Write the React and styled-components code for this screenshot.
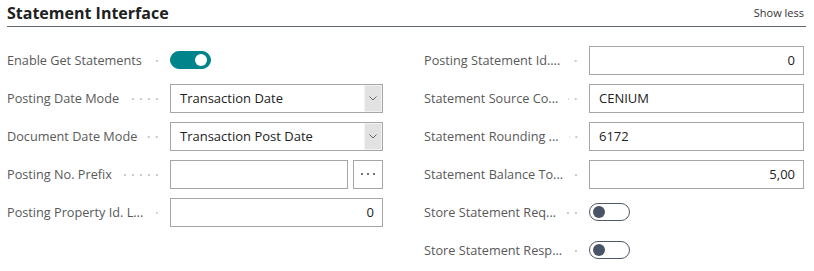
import React from "react";
import styled, { createGlobalStyle } from "styled-components";

const GlobalStyle = createGlobalStyle`
  body {
    margin: 0;
    background: #fff;
    font-family: "Open Sans", "Noto Sans", sans-serif;
  }
`;

const StyledPage = styled.div`
  width: 814px;
  padding: 0 8px 0 7px;
  box-sizing: border-box;
`;
const StyledHeader = styled.div`
  display: flex;
  justify-content: space-between;
  align-items: flex-end;
  height: 27px;
  padding-bottom: 3px;
  box-sizing: border-box;
  border-bottom: 1px solid #616770;
`;
const StyledTitle = styled.h2`
  margin: 0;
  font-size: 16px;
  font-weight: 700;
  color: #212121;
  line-height: 20px;
`;
const StyledShowLess = styled.span`
  font-size: 11px;
  color: #333;
  line-height: 16px;
  margin-bottom: 2px;
  margin-right: 2px;
`;
const StyledGrid = styled.div`
  display: grid;
  grid-template-columns: 376px 380px;
  column-gap: 41px;
  padding-top: 14px;
`;
const StyledColumn = styled.div`
  display: flex;
  flex-direction: column;
`;
const StyledRow = styled.div`
  display: flex;
  align-items: center;
  height: 38px;
`;
const StyledLabelWrap = styled.div`
  flex: 0 0 ${p => p.$width}px;
  display: flex;
  align-items: center;
  min-width: 0;
`;
const StyledLabel = styled.span`
  font-size: 12.7px;
  color: #595959;
  white-space: nowrap;
`;
const StyledLeader = styled.span`
  flex: 1;
  height: 4px;
  margin: 2px 9px 0 10px;
  background-image: radial-gradient(circle, #cacaca 0.8px, transparent 1.1px);
  background-size: 8px 4px;
  background-repeat: repeat-x;
  background-position: right center;
`;
const StyledField = styled.div`
  flex: 1;
  display: flex;
  gap: 5px;
  align-items: center;
`;
const StyledInput = styled.div`
  flex: 1;
  height: 29px;
  box-sizing: border-box;
  border: 1px solid #a6a6a6;
  display: flex;
  align-items: center;
  justify-content: ${p => (p.$right ? "flex-end" : "flex-start")};
  padding: 0 8px 0 9px;
  font-size: 13px;
  color: #222;
`;
const StyledSelect = styled.div`
  flex: 1;
  height: 29px;
  box-sizing: border-box;
  border: 1px solid #a6a6a6;
  display: flex;
  align-items: stretch;
  font-size: 13px;
  color: #222;
`;
const StyledSelectText = styled.span`
  flex: 1;
  display: flex;
  align-items: center;
  padding-left: 9px;
`;
const StyledChevron = styled.span`
  width: 16px;
  background: #e2e2e2;
  border: 1px solid #f2f2f2;
  display: flex;
  align-items: center;
  justify-content: center;
`;
const StyledDotsBtn = styled.div`
  width: 30px;
  height: 29px;
  box-sizing: border-box;
  border: 1px solid #a6a6a6;
  display: flex;
  align-items: center;
  justify-content: center;
  gap: 4px;
`;
const StyledDot = styled.span`
  width: 2px;
  height: 2px;
  border-radius: 50%;
  background: #444;
`;
const StyledToggle = styled.span`
  width: 41px;
  height: 18px;
  box-sizing: border-box;
  border-radius: 9px;
  display: flex;
  align-items: center;
  padding: 0 3px;
  justify-content: ${p => (p.$on ? "flex-end" : "flex-start")};
  background: ${p => (p.$on ? "#00848c" : "#fff")};
  border: 1.5px solid ${p => (p.$on ? "#00848c" : "#4f5868")};
  &::after {
    content: "";
    width: 12px;
    height: 12px;
    border-radius: 50%;
    background: ${p => (p.$on ? "#fff" : "#4a5468")};
  }
`;

const Chevron = () => (
  <svg width="8" height="5" viewBox="0 0 8 5">
    <polyline points="0.5,0.5 4,4 7.5,0.5" fill="none" stroke="#666" strokeWidth="1" />
  </svg>
);

const Row = ({ label, width, children }) => (
  <StyledRow>
    <StyledLabelWrap $width={width}>
      <StyledLabel>{label}</StyledLabel>
      <StyledLeader />
    </StyledLabelWrap>
    <StyledField>{children}</StyledField>
  </StyledRow>
);

const App = () => {
  return (
    <StyledPage>
      <GlobalStyle />
      <StyledHeader>
        <StyledTitle>Statement Interface</StyledTitle>
        <StyledShowLess>Show less</StyledShowLess>
      </StyledHeader>
      <StyledGrid>
        <StyledColumn>
          <Row label="Enable Get Statements" width={163}>
            <StyledToggle $on />
          </Row>
          <Row label="Posting Date Mode" width={163}>
            <StyledSelect>
              <StyledSelectText>Transaction Date</StyledSelectText>
              <StyledChevron>
                <Chevron />
              </StyledChevron>
            </StyledSelect>
          </Row>
          <Row label="Document Date Mode" width={163}>
            <StyledSelect>
              <StyledSelectText>Transaction Post Date</StyledSelectText>
              <StyledChevron>
                <Chevron />
              </StyledChevron>
            </StyledSelect>
          </Row>
          <Row label="Posting No. Prefix" width={163}>
            <StyledInput />
            <StyledDotsBtn>
              <StyledDot />
              <StyledDot />
              <StyledDot />
            </StyledDotsBtn>
          </Row>
          <Row label="Posting Property Id. L..." width={163}>
            <StyledInput $right>0</StyledInput>
          </Row>
        </StyledColumn>
        <StyledColumn>
          <Row label="Posting Statement Id...." width={165}>
            <StyledInput $right>0</StyledInput>
          </Row>
          <Row label="Statement Source Co..." width={165}>
            <StyledInput>CENIUM</StyledInput>
          </Row>
          <Row label="Statement Rounding ..." width={165}>
            <StyledInput>6172</StyledInput>
          </Row>
          <Row label="Statement Balance To..." width={165}>
            <StyledInput $right>5,00</StyledInput>
          </Row>
          <Row label="Store Statement Req..." width={165}>
            <StyledToggle />
          </Row>
          <Row label="Store Statement Resp..." width={165}>
            <StyledToggle />
          </Row>
        </StyledColumn>
      </StyledGrid>
    </StyledPage>
  );
};

export default App;
